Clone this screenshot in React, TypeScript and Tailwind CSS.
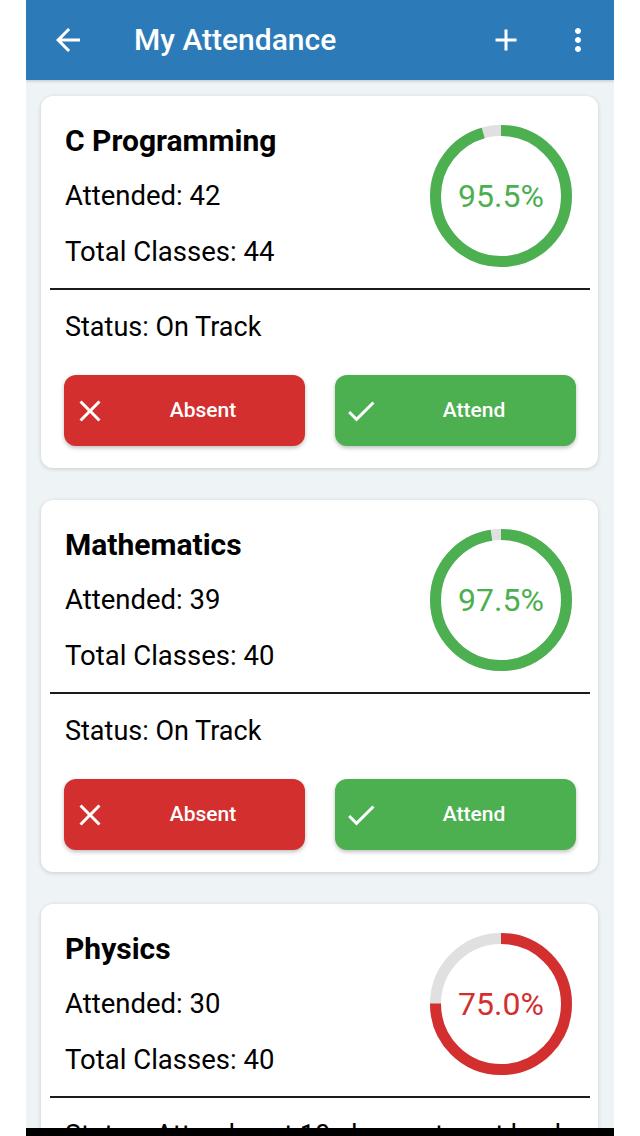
import React from "react";

type Subject = { name: string; attended: number; total: number; status: string };

const subjects: Subject[] = [
  { name: "C Programming", attended: 42, total: 44, status: "Status: On Track" },
  { name: "Mathematics", attended: 39, total: 40, status: "Status: On Track" },
  { name: "Physics", attended: 30, total: 40, status: "Status: Attend next 10 classes to get back on track" },
];

function Ring({ pct, color }: { pct: number; color: string }) {
  const size = 142;
  const sw = 11;
  const r = (size - sw) / 2;
  const c = 2 * Math.PI * r;
  return (
    <div className="relative w-[142px] h-[142px] shrink-0">
      <svg width={size} height={size} viewBox={`0 0 ${size} ${size}`} className="absolute inset-0">
        <circle cx={size / 2} cy={size / 2} r={r} fill="none" stroke="#e0e0e0" strokeWidth={sw} />
        <circle
          cx={size / 2}
          cy={size / 2}
          r={r}
          fill="none"
          stroke={color}
          strokeWidth={sw}
          strokeDasharray={`${(c * pct) / 100} ${c}`}
          transform={`rotate(-90 ${size / 2} ${size / 2})`}
        />
      </svg>
      <div className="absolute inset-0 flex items-center justify-center">
        <span className="text-[32px]" style={{ color }}>
          {pct.toFixed(1)}%
        </span>
      </div>
    </div>
  );
}

function Card({ s }: { s: Subject }) {
  const pct = (s.attended / s.total) * 100;
  const color = pct >= 80 ? "#4caf50" : "#d32f2f";
  return (
    <div className="bg-white rounded-[12px] shadow-[0_1px_4px_rgba(0,0,0,0.16)] pt-4 pb-[22px] shrink-0">
      <div className="flex items-center pl-6 pr-[26px]">
        <div className="flex-1 flex flex-col">
          <div className="h-[56px] flex items-center text-[30px] font-bold text-black">{s.name}</div>
          <div className="h-[56px] flex items-center text-[27.5px] text-black">Attended: {s.attended}</div>
          <div className="h-[56px] flex items-center text-[27.5px] text-black">Total Classes: {s.total}</div>
        </div>
        <Ring pct={pct} color={color} />
      </div>
      <div className="mt-2 ml-[9px] mr-2 h-[2px] bg-[#1a1a1a]" />
      <div className="mt-[9px] h-[56px] flex items-center pl-6 text-[27px] text-black whitespace-nowrap">
        {s.status}
      </div>
      <div className="mt-5 flex gap-[30px] pl-[23px] pr-[22px]">
        <button className="flex-1 h-[71px] rounded-[12px] bg-[#d32f2f] shadow-[0_2px_4px_rgba(0,0,0,0.25)] flex items-center pl-2 text-white">
          <svg width="36" height="36" viewBox="0 0 24 24" fill="white">
            <path d="M19 6.41L17.59 5 12 10.59 6.41 5 5 6.41 10.59 12 5 17.59 6.41 19 12 13.41 17.59 19 19 17.59 13.41 12z" />
          </svg>
          <span className="flex-1 text-center text-[21px] font-medium mr-[7px]">Absent</span>
        </button>
        <button className="flex-1 h-[71px] rounded-[12px] bg-[#4caf50] shadow-[0_2px_4px_rgba(0,0,0,0.25)] flex items-center pl-2 text-white">
          <svg width="36" height="36" viewBox="0 0 24 24" fill="white">
            <path d="M9 16.17L4.83 12l-1.42 1.41L9 19 21 7l-1.41-1.41z" />
          </svg>
          <span className="flex-1 text-center text-[21px] font-medium mr-[7px]">Attend</span>
        </button>
      </div>
    </div>
  );
}

export default function App() {
  return (
    <div className="w-[640px] h-[1136px] bg-white flex justify-center" style={{ fontFamily: "Roboto, 'Noto Sans', sans-serif" }}>
      <div className="w-[588px] h-[1136px] flex flex-col overflow-hidden">
        <header className="h-[80px] shrink-0 bg-[#2c7bb8] flex items-center pl-6 pr-[18px] text-white shadow-[0_1px_3px_rgba(0,0,0,0.2)] z-10">
          <svg width="36" height="36" viewBox="0 0 24 24" fill="white">
            <path d="M20 11H7.83l5.59-5.59L12 4l-8 8 8 8 1.41-1.41L7.83 13H20v-2z" />
          </svg>
          <h1 className="ml-12 flex-1 text-[30px] font-medium leading-none">My Attendance</h1>
          <svg width="36" height="36" viewBox="0 0 24 24" fill="white">
            <path d="M19 13h-6v6h-2v-6H5v-2h6V5h2v6h6v2z" />
          </svg>
          <svg width="36" height="36" viewBox="0 0 24 24" fill="white" className="ml-9">
            <path d="M12 8c1.1 0 2-.9 2-2s-.9-2-2-2-2 .9-2 2 .9 2 2 2zm0 2c-1.1 0-2 .9-2 2s.9 2 2 2 2-.9 2-2-.9-2-2-2zm0 6c-1.1 0-2 .9-2 2s.9 2 2 2 2-.9 2-2-.9-2-2-2z" />
          </svg>
        </header>
        <main className="flex-1 overflow-hidden bg-[#eef3f6] px-[15px] pt-4 flex flex-col gap-8 pr-4">
          {subjects.map((s) => (
            <Card key={s.name} s={s} />
          ))}
        </main>
        <div className="h-2 shrink-0 bg-black" />
      </div>
    </div>
  );
}
